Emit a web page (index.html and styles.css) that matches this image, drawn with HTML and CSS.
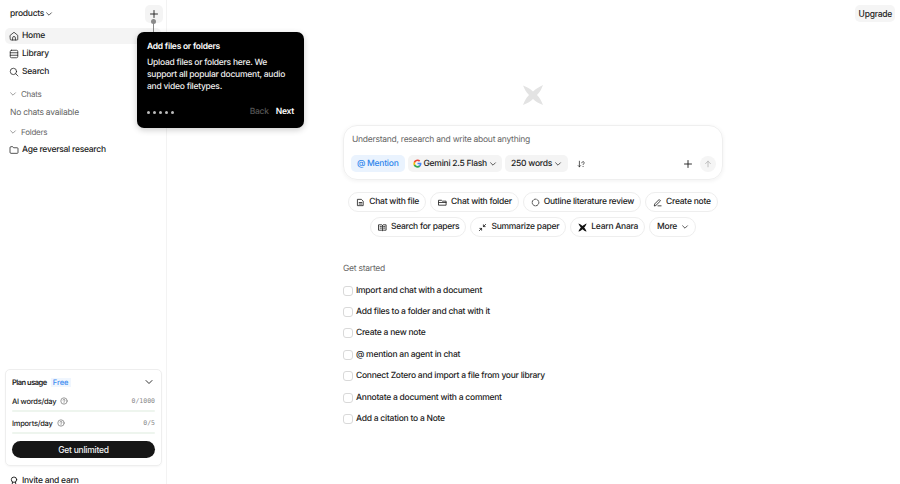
FILE: index.html
```html
<!DOCTYPE html>
<html lang="en">
<head>
<meta charset="utf-8">
<title>Anara</title>
<link rel="stylesheet" href="styles.css">
</head>
<body>
<div class="app">
  <aside class="sidebar">
    <div class="side-head">
      <span class="workspace">products
        <svg class="ic8" viewBox="0 0 10 10"><path d="M2 3.500 5 6.500 8 3.500" class="st" stroke-width="1.4"/></svg>
      </span>
      <span class="add-btn"><svg class="ic10" viewBox="0 0 10 10"><path d="M5 1.500v7M1.500 5h7" class="st" stroke-width="1"/></svg></span>
    </div>
    <nav class="nav">
      <a class="nav-row active"><svg class="ic10" viewBox="0 0 12 12"><path d="M1.500 5.200 6 1.500l4.500 3.700V10a.8.8 0 0 1-.8.8H2.300a.8.8 0 0 1-.8-.8z" class="st"/><path d="M4.300 10.800V8.300a1.700 1.700 0 0 1 3.400 0v2.500" class="st"/></svg>Home</a>
      <a class="nav-row"><svg class="ic10" viewBox="0 0 12 12"><rect x="1.500" y="1.500" width="9" height="9" rx="1.500" class="st"/><path d="M1.500 4.500h9M1.500 7.500h9" class="st"/></svg>Library</a>
      <a class="nav-row"><svg class="ic10" viewBox="0 0 12 12"><circle cx="5.300" cy="5.300" r="3.800" class="st"/><path d="M8.200 8.200 10.800 10.800" class="st"/></svg>Search</a>
    </nav>
    <div class="sec-head"><svg class="ic8" viewBox="0 0 10 10"><path d="M2 3.500 5 6.500 8 3.500" class="st mute"/></svg>Chats</div>
    <div class="empty">No chats available</div>
    <div class="sec-head folders"><svg class="ic8" viewBox="0 0 10 10"><path d="M2 3.500 5 6.500 8 3.500" class="st mute"/></svg>Folders</div>
    <a class="nav-row folder"><svg class="ic10" viewBox="0 0 12 12"><path d="M1.200 3a1 1 0 0 1 1-1h2.200l1.100 1.300h4.300a1 1 0 0 1 1 1v4.700a1 1 0 0 1-1 1H2.200a1 1 0 0 1-1-1z" class="st"/></svg>Age reversal research</a>
    <div class="spacer"></div>
    <section class="plan">
      <div class="plan-head"><b>Plan usage</b><span class="free">Free</span>
        <svg class="ic10 plan-chev" viewBox="0 0 10 10"><path d="M2 3.500 5 6.500 8 3.500" class="st"/></svg></div>
      <div class="usage"><span>AI words/day</span><svg class="ic8" viewBox="0 0 10 10"><circle cx="5" cy="5" r="4" class="st mute"/><path d="M3.800 4a1.200 1.200 0 1 1 1.600 1.200c-.3.1-.4.3-.4.700M5 7.200v.1" class="st mute"/></svg><code>0/1000</code></div>
      <div class="track"></div>
      <div class="usage second"><span>Imports/day</span><svg class="ic8" viewBox="0 0 10 10"><circle cx="5" cy="5" r="4" class="st mute"/><path d="M3.800 4a1.200 1.200 0 1 1 1.600 1.200c-.3.1-.4.3-.4.700M5 7.200v.1" class="st mute"/></svg><code>0/5</code></div>
      <div class="track"></div>
      <button class="unlimited">Get unlimited</button>
    </section>
    <a class="nav-row invite"><svg class="ic10" viewBox="0 0 10 10"><circle cx="5" cy="3.700" r="2.700" class="st"/><path d="M3.500 6.200 3 9.500 5 8.500l2 1-.5-3.300" class="st"/></svg>Invite and earn</a>
  </aside>

  <main class="main">
    <div class="topbar"><button class="upgrade">Upgrade</button></div>
    <div class="center">
      <svg class="logo" viewBox="0 0 22 22"><path d="M1 1.500C5 3 8 4.500 11 7.500 14 4.500 17 3 21 1 19.500 5 18 8 15 11c3 3 4.500 6 6 10-4-1.500-7-3-10-6-3 3-6 4.500-10 6 1.500-4 3-7 6-10C4 8 2.500 5 1 1.500z" fill="#e3e3e3"/></svg>
      <section class="composer">
        <div class="prompt">Understand, research and write about anything</div>
        <div class="tools">
          <span class="pill wide blue"><span class="at">@</span> Mention</span>
          <span class="pill"><svg class="ic9" viewBox="0 0 48 48"><path fill="#4285F4" d="M45 24.500c0-1.600-.1-3.100-.4-4.500H24v8.500h11.800c-.5 2.700-2 5-4.400 6.600v5.500h7.100C42.600 36.800 45 31.200 45 24.500z"/><path fill="#34A853" d="M24 46c5.900 0 10.900-2 14.500-5.300l-7.100-5.500c-2 1.300-4.500 2.100-7.400 2.100-5.700 0-10.500-3.800-12.300-9H4.400v5.700C8 41.100 15.400 46 24 46z"/><path fill="#FBBC05" d="M11.700 28.300c-.9-2.700-.9-5.800 0-8.500v-5.700H4.400c-3 6-3 13.900 0 19.900z"/><path fill="#EA4335" d="M24 10.700c3.200 0 6.100 1.100 8.400 3.300l6.300-6.300C34.900 4.200 29.900 2 24 2 15.400 2 8 6.900 4.400 14.100l7.300 5.700c1.800-5.300 6.600-9.100 12.300-9.100z"/></svg>Gemini 2.5 Flash<svg class="ic8" viewBox="0 0 10 10"><path d="M2 3.500 5 6.500 8 3.500" class="st"/></svg></span>
          <span class="pill wide">250 words<svg class="ic8" viewBox="0 0 10 10"><path d="M2 3.500 5 6.500 8 3.500" class="st"/></svg></span>
          <svg class="ic8 sort" viewBox="0 0 10 10"><path d="M3 1.500v7M1.500 7 3 8.500 4.500 7" class="st" stroke-width="1.200"/><path d="M6 3.500a1.500 1.500 0 1 1 2.300 1.300c-.5.300-.7.500-.7 1M7.600 8v.3" class="st" stroke-width="1.200"/></svg>
          <span class="grow"></span>
          <svg class="ic10" viewBox="0 0 10 10"><path d="M5 1.500v7M1.500 5h7" class="st" stroke-width="1.100"/></svg>
          <span class="send"><svg class="ic8" viewBox="0 0 10 10"><path d="M5 8.500v-7M2 4.500l3-3 3 3" class="st faint"/></svg></span>
        </div>
      </section>
      <div class="chips">
        <span class="chip"><svg class="ic9" viewBox="0 0 10 10"><path d="M2 1.500h4l2 2v5H2zM3.500 5h3M3.500 6.700h3" class="st"/></svg>Chat with file</span>
        <span class="chip"><svg class="ic9" viewBox="0 0 10 10"><path d="M1 2.500h2.800l1 1H9v4.500H1zM1 5h8" class="st"/></svg>Chat with folder</span>
        <span class="chip"><svg class="ic9" viewBox="0 0 10 10"><circle cx="5" cy="5" r="3.700" class="st" stroke-dasharray="1.800 1.300"/></svg>Outline literature review</span>
        <span class="chip"><svg class="ic9" viewBox="0 0 10 10"><path d="M1.500 8.500 2 6.500 6.800 1.700 8.300 3.200 3.500 8zM5.500 8.700h3.500" class="st"/></svg>Create note</span>
      </div>
      <div class="chips row2">
        <span class="chip"><svg class="ic9" viewBox="0 0 10 10"><path d="M1 2h3.300L5 2.700 5.700 2H9v6H5.700L5 8.500 4.300 8H1zM5 2.700v5.500M2.300 4h1.500M2.300 5.700h1.500M6.200 4h1.500M6.200 5.700h1.500" class="st"/></svg>Search for papers</span>
        <span class="chip"><svg class="ic9" viewBox="0 0 10 10"><path d="M1.500 8.500 4 6M4 8V6H2M8.500 1.500 6 4M6 2v2h2" class="st"/></svg>Summarize paper</span>
        <span class="chip"><svg class="ic9" viewBox="0 0 22 22"><path d="M1 1.500C5 3 8 4.500 11 7.500 14 4.500 17 3 21 1 19.500 5 18 8 15 11c3 3 4.500 6 6 10-4-1.500-7-3-10-6-3 3-6 4.500-10 6 1.500-4 3-7 6-10C4 8 2.500 5 1 1.500z" fill="#111"/></svg>Learn Anara</span>
        <span class="chip">More<svg class="ic8" viewBox="0 0 10 10"><path d="M2 3.500 5 6.500 8 3.500" class="st"/></svg></span>
      </div>
      <section class="started">
        <h2>Get started</h2>
        <ul class="checklist">
          <li><span class="box"></span>Import and chat with a document</li>
          <li><span class="box"></span>Add files to a folder and chat with it</li>
          <li><span class="box"></span>Create a new note</li>
          <li><span class="box"></span>@ mention an agent in chat</li>
          <li><span class="box"></span>Connect Zotero and import a file from your library</li>
          <li><span class="box"></span>Annotate a document with a comment</li>
          <li><span class="box"></span>Add a citation to a Note</li>
        </ul>
      </section>
    </div>
  </main>

  <div class="connector"></div>
  <div class="tooltip">
    <h3>Add files or folders</h3>
    <p>Upload files or folders here. We support all popular document, audio and video filetypes.</p>
    <div class="tip-foot">
      <span class="dots"><i></i><i></i><i></i><i></i><i></i></span>
      <span class="back">Back</span><span class="next">Next</span>
    </div>
  </div>
</div>
</body>
</html>
```

FILE: styles.css
```css
* { box-sizing: border-box; }
html, body { margin: 0; height: 100%; overflow: hidden; }
body { font-family: Inter, "Liberation Sans", sans-serif; font-size: 8.500px; font-weight: 450; letter-spacing: -.25px; color: #1c1c1c; background: #fff; text-rendering: geometricPrecision; }
svg { flex: none; display: block; }
.st { fill: none; stroke: currentColor; stroke-width: .9; stroke-linecap: round; stroke-linejoin: round; }
.mute { stroke: #777; }
.faint { stroke: #aaa; }
.ic8 { width: 8px; height: 8px; }
.ic9 { width: 9px; height: 9px; }
.ic10 { width: 10px; height: 10px; }
.app { position: relative; display: flex; width: 900px; height: 484px; overflow: hidden; }

.sidebar { width: 167px; height: 484px; flex: none; border-right: 1px solid #f3f3f3; padding: 5px 5px 0; display: flex; flex-direction: column; }
.side-head { display: flex; justify-content: space-between; align-items: center; height: 18px; padding-left: 5px; margin-bottom: 5px; }
.workspace { display: flex; align-items: center; gap: 1px; font-weight: 500; }
.add-btn { width: 18px; height: 18px; margin-right: -2px; border-radius: 5px; background: #f4f4f4; display: flex; align-items: center; justify-content: center; }
.nav { display: flex; flex-direction: column; gap: 2px; }
.nav-row { display: flex; align-items: center; gap: 3px; height: 16px; padding-left: 4px; }
.nav-row.active { background: #f4f4f4; border-radius: 5px; width: 156px; }
.sec-head { display: flex; align-items: center; gap: 4px; font-size: 8px; font-weight: 400; color: #666; padding-left: 4px; margin-top: 8px; height: 12px; }
.empty { color: #666; font-weight: 400; padding-left: 5px; margin-top: 7px; height: 12px; line-height: 12px; }
.sec-head.folders { margin-top: 7px; }
.folder { margin-top: 4px; }
.spacer { flex: 1; }
.plan { width: 157px; height: 97px; border: 1px solid #eee; border-radius: 5px; padding: 6px 6px 0; box-shadow: 0 1px 2px rgba(0,0,0,.04); flex: none; }
.plan-head { display: flex; align-items: center; height: 12px; font-size: 7.500px; letter-spacing: -.5px; }
.plan-head b { font-weight: 600; }
.free { color: #3d8bf0; margin-left: 4px; background: #f0f6fe; padding: 0 2px; font-weight: 500; letter-spacing: 0; }
.plan-chev { margin-left: auto; margin-right: 1px; }
.usage { display: flex; align-items: center; gap: 4px; height: 14px; margin-top: 6px; font-size: 7.500px; }
.usage.second { margin-top: 4px; }
.usage code { margin-left: auto; font-family: "DejaVu Sans Mono", monospace; font-size: 6.500px; letter-spacing: 0; color: #888; }
.track { height: 2px; margin-top: 2px; background: #eef5ee; border-radius: 1px; }
.unlimited { display: block; width: 100%; height: 17px; margin-top: 7px; border: 0; border-radius: 9px; background: #161616; color: #f2f2f2; font: 500 8.500px Inter, sans-serif; letter-spacing: inherit; padding: 0; }
.invite { margin-top: 7px; margin-bottom: -5px; flex: none; gap: 3px; padding-left: 4px; }

.main { flex: 1; min-width: 0; height: 484px; padding-right: 1px; display: flex; flex-direction: column; }
.topbar { display: flex; justify-content: flex-end; height: 27px; padding: 5px 4px 0 0; flex: none; }
.upgrade { height: 17px; padding: 0 3px 0 4px; border: 0; border-radius: 5px; background: #f5f5f5; font: 500 8.500px Inter, sans-serif; letter-spacing: inherit; color: #1c1c1c; }
.center { width: 380px; margin: 0 auto; display: flex; flex-direction: column; align-items: center; }
.logo { width: 22px; height: 22px; margin-top: 57px; }
.composer { width: 380px; height: 55px; margin-top: 19px; border: 1px solid #efefef; border-radius: 14px; box-shadow: 0 1px 4px rgba(0,0,0,.06); padding: 8px 6px 0 7px; flex: none; }
.prompt { height: 13px; line-height: 13px; padding-left: 1px; color: #666; font-weight: 400; }
.tools { display: flex; align-items: center; gap: 3px; margin-top: 8px; }
.pill { display: flex; align-items: center; gap: 2px; height: 17px; padding: 0 5px; border-radius: 5px; background: #f4f4f4; font-weight: 500; white-space: nowrap; }
.pill.wide { padding: 0 6px; }
.pill.blue { background: #eaf3fe; color: #2f86ec; }
.sort { margin-left: 6px; }
.grow { flex: 1; }
.send { width: 16px; height: 16px; border-radius: 50%; background: #f5f5f5; display: flex; align-items: center; justify-content: center; margin-left: 4px; }
.chips { display: flex; justify-content: center; gap: 4px; margin-top: 12px; white-space: nowrap; }
.chips.row2 { margin-top: 5px; }
.chip { display: flex; align-items: center; gap: 4px; height: 20px; padding: 0 6px 0 7px; border: 1px solid #eee; border-radius: 10px; }
.started { width: 100%; margin-top: 26px; }
.started h2 { margin: 0; font-size: 8.500px; font-weight: 400; color: #666; height: 12px; line-height: 12px; }
.checklist { list-style: none; margin: 5px 0 0; padding: 0; display: flex; flex-direction: column; }
.checklist li { display: flex; align-items: center; gap: 3px; height: 21.400px; }
.box { width: 10px; height: 10px; border: 1px solid #d9d9d9; border-radius: 3px; flex: none; }

.connector { position: absolute; left: 153px; top: 19px; width: 1px; height: 16px; background: #8a8a8a; }
.connector::before { content: ""; position: absolute; left: -2px; top: 0; width: 5px; height: 5px; border-radius: 50%; background: #8a8a8a; }
.tooltip { position: absolute; left: 137px; top: 32px; width: 167px; height: 96px; padding: 9px 10px; background: #000; color: #fff; border-radius: 7px; box-shadow: 0 2px 6px rgba(0,0,0,.2); display: flex; flex-direction: column; }
.tooltip h3 { margin: 0; font-size: 8.500px; font-weight: 600; line-height: 12px; }
.tooltip p { margin: 4px 0 0; line-height: 12px; color: #eee; font-size: 8.500px; }
.tip-foot { margin-top: auto; display: flex; align-items: center; height: 14px; }
.dots { display: flex; gap: 3px; margin-right: auto; }
.dots i { width: 3px; height: 3px; border-radius: 50%; background: #bbb; }
.back { color: #555; margin-right: 7px; font-weight: 500; }
.next { font-weight: 600; }
```
